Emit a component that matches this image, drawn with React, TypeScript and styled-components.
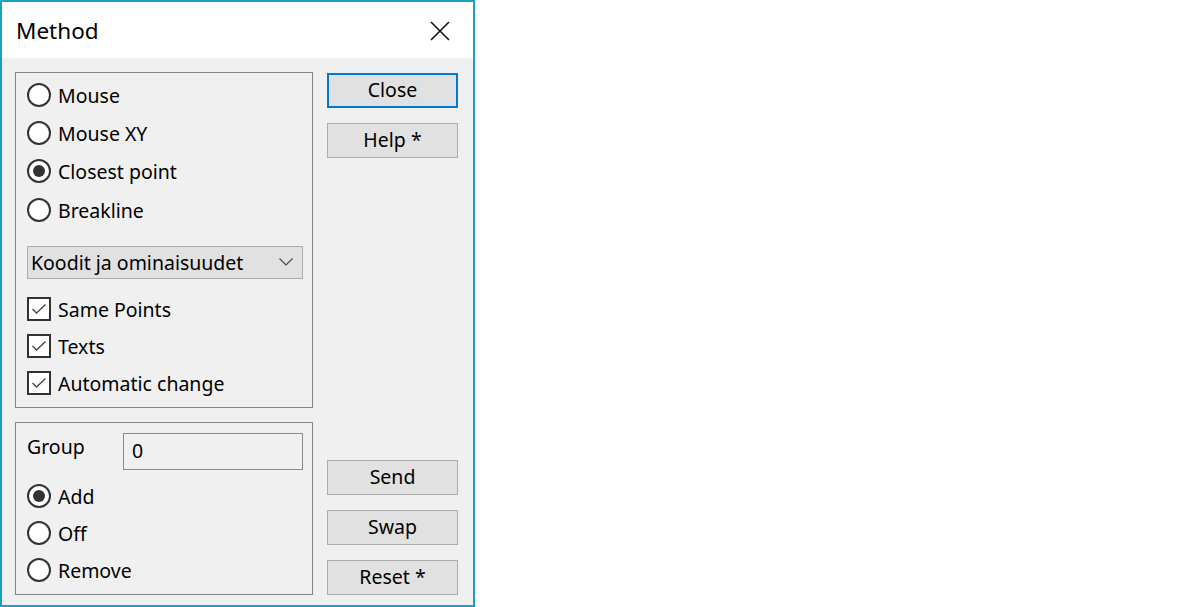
import React from "react";
import styled, { createGlobalStyle } from "styled-components";

const Global = createGlobalStyle`
  html, body { margin: 0; padding: 0; background: #ffffff; }
  body { font-family: "Noto Sans", "Open Sans", sans-serif; color: #000; }
`;

const Page = styled.div`
  width: 1200px;
  height: 607px;
  display: flex;
  align-items: flex-start;
`;

const Window = styled.div`
  width: 475px;
  height: 607px;
  box-sizing: border-box;
  border: 2px solid #1aa0c4;
  display: flex;
  flex-direction: column;
  background: #f0f0f0;
`;

const TitleBar = styled.div`
  height: 56px;
  background: #ffffff;
  display: flex;
  align-items: center;
  justify-content: space-between;
  padding: 0 23px 0 14px;
  flex-shrink: 0;
`;

const Title = styled.span`
  font-size: 22.5px;
  line-height: 1;
  padding-top: 2px;
`;

const CloseX = styled.svg`
  width: 20px;
  height: 20px;
  display: block;
  margin-top: 2px;
`;

const Content = styled.div`
  flex: 1;
  display: grid;
  grid-template-columns: 298px 131px;
  column-gap: 14px;
  padding: 14px 16px 10px 13px;
`;

const LeftCol = styled.div`
  display: flex;
  flex-direction: column;
  gap: 14px;
`;

const GroupBox = styled.div<{ $h: number }>`
  height: ${(p) => p.$h}px;
  box-sizing: border-box;
  border: 1px solid #858585;
  padding: 3px 9px 0 11px;
  display: flex;
  flex-direction: column;
`;

const Row = styled.label<{ $h: number }>`
  height: ${(p) => p.$h}px;
  display: flex;
  align-items: center;
  gap: 7px;
  font-size: 19.5px;
  flex-shrink: 0;
  padding-top: 1px;
  box-sizing: border-box;
`;

const RadioCircle = styled.span<{ $on?: boolean }>`
  width: 24px;
  height: 24px;
  box-sizing: border-box;
  border: 2px solid #333333;
  border-radius: 50%;
  background: #ffffff;
  display: flex;
  align-items: center;
  justify-content: center;
  flex-shrink: 0;
  margin-top: -1px;
  &::after {
    content: "";
    width: 12px;
    height: 12px;
    border-radius: 50%;
    background: #333333;
    display: ${(p) => (p.$on ? "block" : "none")};
  }
`;

const CheckBox = styled.span`
  width: 24px;
  height: 24px;
  box-sizing: border-box;
  border: 2px solid #333333;
  background: #ffffff;
  display: flex;
  align-items: center;
  justify-content: center;
  flex-shrink: 0;
  margin-top: -1px;
`;

const Combo = styled.div`
  margin-top: 16px;
  margin-bottom: 11px;
  height: 33px;
  box-sizing: border-box;
  border: 1px solid #adadad;
  background: #e1e1e1;
  display: flex;
  align-items: center;
  justify-content: space-between;
  padding: 0 9px 1px 3px;
  font-size: 19.5px;
  flex-shrink: 0;
`;

const GroupRow = styled.div`
  display: flex;
  justify-content: space-between;
  align-items: flex-start;
  margin-top: 7px;
  margin-bottom: 7px;
`;

const GroupLabel = styled.span`
  font-size: 19.5px;
  line-height: 1;
  padding-top: 4px;
`;

const TextInput = styled.div`
  width: 180px;
  height: 37px;
  box-sizing: border-box;
  border: 1px solid #8c8c8c;
  background: #f0f0f0;
  display: flex;
  align-items: center;
  padding-left: 8px;
  padding-bottom: 2px;
  font-size: 19.5px;
`;

const RightCol = styled.div`
  display: flex;
  flex-direction: column;
  justify-content: space-between;
  padding: 1px 0 0;
`;

const ButtonGroup = styled.div`
  display: flex;
  flex-direction: column;
  gap: 15px;
`;

const Button = styled.button<{ $def?: boolean }>`
  width: 131px;
  height: 35px;
  box-sizing: border-box;
  border: ${(p) => (p.$def ? "2px solid #0078d7" : "1px solid #adadad")};
  background: #e1e1e1;
  font-family: "Noto Sans", "Open Sans", sans-serif;
  font-size: 19.5px;
  color: #000;
  padding: 0 0 2px;
  margin: 0;
  display: flex;
  align-items: center;
  justify-content: center;
`;

const Radio = ({ label, on, h }: { label: string; on?: boolean; h: number }) => (
  <Row $h={h}>
    <RadioCircle $on={on} />
    {label}
  </Row>
);

const Check = ({ label }: { label: string }) => (
  <Row $h={37}>
    <CheckBox>
      <svg width="16" height="12" viewBox="0 0 16 12">
        <path d="M1.5 6 L5.5 10 L14.5 1.5" fill="none" stroke="#444" strokeWidth="1.3" />
      </svg>
    </CheckBox>
    {label}
  </Row>
);

export default function App() {
  return (
    <Page>
      <Global />
      <Window>
        <TitleBar>
          <Title>Method</Title>
          <CloseX viewBox="0 0 20 20">
            <path d="M1 1 L19 19 M19 1 L1 19" stroke="#111" strokeWidth="1.6" fill="none" />
          </CloseX>
        </TitleBar>
        <Content>
          <LeftCol>
            <GroupBox $h={336}>
              <Radio label="Mouse" h={38} />
              <Radio label="Mouse XY" h={38} />
              <Radio label="Closest point" on h={38} />
              <Radio label="Breakline" h={40} />
              <Combo>
                <span>Koodit ja ominaisuudet</span>
                <svg width="14" height="8" viewBox="0 0 14 8">
                  <path d="M0.5 0.5 L7 7 L13.5 0.5" fill="none" stroke="#444" strokeWidth="1.1" />
                </svg>
              </Combo>
              <Check label="Same Points" />
              <Check label="Texts" />
              <Check label="Automatic change" />
            </GroupBox>
            <GroupBox $h={173}>
              <GroupRow>
                <GroupLabel>Group</GroupLabel>
                <TextInput>0</TextInput>
              </GroupRow>
              <Radio label="Add" on h={37} />
              <Radio label="Off" h={37} />
              <Radio label="Remove" h={38} />
            </GroupBox>
          </LeftCol>
          <RightCol>
            <ButtonGroup>
              <Button $def>Close</Button>
              <Button>Help *</Button>
            </ButtonGroup>
            <ButtonGroup>
              <Button>Send</Button>
              <Button>Swap</Button>
              <Button>Reset *</Button>
            </ButtonGroup>
          </RightCol>
        </Content>
      </Window>
    </Page>
  );
}
